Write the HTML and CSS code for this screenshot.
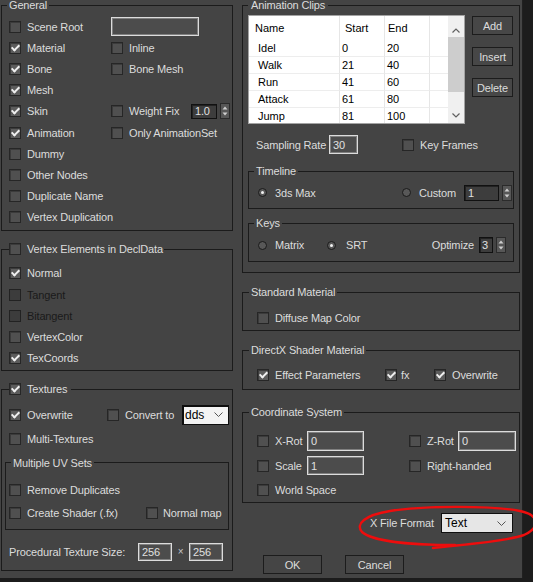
FILE: index.html
```html
<!DOCTYPE html>
<html>
<head>
<meta charset="utf-8">
<title>X File Export</title>
<link rel="stylesheet" href="styles.css">
</head>
<body>
<div class="window">
  <div class="col col-left">
    <fieldset class="group g-general">
      <legend>General</legend>
      <div class="grid2">
        <div class="chk"><span class="cb"></span>Scene Root</div>
        <div class="chk"><span class="tf tf-scene"></span></div>
        <div class="chk"><span class="cb on"></span>Material</div>
        <div class="chk"><span class="cb"></span>Inline</div>
        <div class="chk"><span class="cb on"></span>Bone</div>
        <div class="chk"><span class="cb"></span>Bone Mesh</div>
        <div class="chk"><span class="cb on"></span>Mesh</div>
        <div></div>
        <div class="chk"><span class="cb on"></span>Skin</div>
        <div class="chk"><span class="cb"></span>Weight Fix
          <span class="spin push"><span class="sf sf-wf">1.0</span><span class="arr"><svg width="8" height="14" viewBox="0 0 8 14"><polygon points="1.5,5.5 4,2.5 6.5,5.5" fill="#cfcfcf"/><polygon points="1.5,8.5 4,11.5 6.5,8.5" fill="#cfcfcf"/></svg></span></span>
        </div>
        <div class="chk"><span class="cb on"></span>Animation</div>
        <div class="chk"><span class="cb"></span>Only AnimationSet</div>
        <div class="chk span2"><span class="cb"></span>Dummy</div>
        <div class="chk span2"><span class="cb"></span>Other Nodes</div>
        <div class="chk span2"><span class="cb"></span>Duplicate Name</div>
        <div class="chk span2"><span class="cb"></span>Vertex Duplication</div>
      </div>
    </fieldset>

    <fieldset class="group g-vertex">
      <legend class="cbleg"><span class="cb"></span>Vertex Elements in DeclData</legend>
      <div class="rows1">
        <div class="chk"><span class="cb on"></span>Normal</div>
        <div class="chk dis"><span class="cb"></span>Tangent</div>
        <div class="chk dis"><span class="cb"></span>Bitangent</div>
        <div class="chk"><span class="cb"></span>VertexColor</div>
        <div class="chk"><span class="cb on"></span>TexCoords</div>
      </div>
    </fieldset>

    <fieldset class="group g-tex">
      <legend class="cbleg tex-leg"><span class="cb on"></span>Textures</legend>
      <div class="tex-row1">
        <div class="chk c1"><span class="cb on"></span>Overwrite</div>
        <div class="chk"><span class="cb"></span>Convert to</div>
        <div class="dd dd-dds"><span>dds</span><svg width="9" height="5" viewBox="0 0 9 5"><polyline points="0.5,0.5 4.5,4.5 8.5,0.5" fill="none" stroke="#555" stroke-width="1"/></svg></div>
      </div>
      <div class="tex-row2">
        <div class="chk"><span class="cb"></span>Multi-Textures</div>
      </div>
      <fieldset class="group g-uv">
        <legend>Multiple UV Sets</legend>
        <div class="grid-uv">
          <div class="chk span2"><span class="cb"></span>Remove Duplicates</div>
          <div class="chk"><span class="cb"></span>Create Shader (.fx)</div>
          <div class="chk gap5"><span class="cb"></span>Normal map</div>
        </div>
      </fieldset>
      <div class="proc">
        <span class="lbl">Procedural Texture Size:</span>
        <span class="tf tf-256">256</span>
        <span class="times">×</span>
        <span class="tf tf-256">256</span>
      </div>
    </fieldset>
  </div>

  <div class="col col-right">
    <fieldset class="group g-anim">
      <legend>Animation Clips</legend>
      <div class="clips">
        <div class="list">
          <div class="table">
            <div class="th c1">Name</div><div class="th c2">Start</div><div class="th c3">End</div><div class="th c4"></div>
            <div class="td c1">Idel</div><div class="td c2">0</div><div class="td c3">20</div><div class="td c4"></div>
            <div class="td c1">Walk</div><div class="td c2">21</div><div class="td c3">40</div><div class="td c4"></div>
            <div class="td c1">Run</div><div class="td c2">41</div><div class="td c3">60</div><div class="td c4"></div>
            <div class="td c1">Attack</div><div class="td c2">61</div><div class="td c3">80</div><div class="td c4"></div>
            <div class="td c1">Jump</div><div class="td c2">81</div><div class="td c3">100</div><div class="td c4"></div>
          </div>
          <div class="sb">
            <div class="sb-up"><svg width="8" height="5" viewBox="0 0 8 5"><polyline points="0.5,4.5 4,1 7.5,4.5" fill="none" stroke="#606060" stroke-width="1.2"/></svg></div>
            <div class="sb-thumb"></div>
            <div class="sb-track"></div>
            <div class="sb-down"><svg width="8" height="5" viewBox="0 0 8 5"><polyline points="0.5,0.5 4,4 7.5,0.5" fill="none" stroke="#606060" stroke-width="1.2"/></svg></div>
          </div>
        </div>
        <div class="btns">
          <div class="btn">Add</div>
          <div class="btn">Insert</div>
          <div class="btn">Delete</div>
        </div>
      </div>
      <div class="samp">
        <span class="lbl">Sampling Rate</span>
        <span class="tf tf-samp">30</span>
        <div class="chk kf"><span class="cb"></span>Key Frames</div>
      </div>
      <fieldset class="group g-sub g-timeline">
        <legend>Timeline</legend>
        <div class="tl-row">
          <div class="rad"><span class="rb on"></span>3ds Max</div>
          <div class="rad"><span class="rb"></span>Custom
            <span class="spin push"><span class="sf sf-custom">1</span><span class="arr"><svg width="8" height="14" viewBox="0 0 8 14"><polygon points="1.5,5.5 4,2.5 6.5,5.5" fill="#cfcfcf"/><polygon points="1.5,8.5 4,11.5 6.5,8.5" fill="#cfcfcf"/></svg></span></span>
          </div>
        </div>
      </fieldset>
      <fieldset class="group g-sub g-keys">
        <legend>Keys</legend>
        <div class="keys-row">
          <div class="rad"><span class="rb"></span>Matrix</div>
          <div class="rad rad-srt"><span class="rb on"></span>SRT
            <span class="opt push">Optimize</span>
            <span class="spin"><span class="sf sf-opt">3</span><span class="arr"><svg width="8" height="14" viewBox="0 0 8 14"><polygon points="1.5,5.5 4,2.5 6.5,5.5" fill="#cfcfcf"/><polygon points="1.5,8.5 4,11.5 6.5,8.5" fill="#cfcfcf"/></svg></span></span>
          </div>
        </div>
      </fieldset>
    </fieldset>

    <fieldset class="group g-r g-std">
      <legend>Standard Material</legend>
      <div class="row16">
        <div class="chk"><span class="cb"></span>Diffuse Map Color</div>
      </div>
    </fieldset>

    <fieldset class="group g-r g-dx">
      <legend>DirectX Shader Material</legend>
      <div class="dx-row">
        <div class="chk"><span class="cb on"></span>Effect Parameters</div>
        <div class="chk gap4"><span class="cb on"></span>fx</div>
        <div class="chk"><span class="cb on"></span>Overwrite</div>
      </div>
    </fieldset>

    <fieldset class="group g-r g-coord">
      <legend>Coordinate System</legend>
      <div class="coord-grid">
        <div class="chk"><span class="cb"></span><span class="cl w32">X-Rot</span><span class="tf tf-x">0</span></div>
        <div class="chk"><span class="cb"></span><span class="cl w31">Z-Rot</span><span class="tf tf-z">0</span></div>
        <div class="chk"><span class="cb"></span><span class="cl w32">Scale</span><span class="tf tf-s">1</span></div>
        <div class="chk"><span class="cb"></span>Right-handed</div>
        <div class="chk span2"><span class="cb"></span>World Space</div>
      </div>
    </fieldset>

    <div class="xfile">
      <span>X File Format</span>
      <div class="dd dd-text"><span>Text</span><svg width="9" height="5" viewBox="0 0 9 5"><polyline points="0.5,0.5 4.5,4.5 8.5,0.5" fill="none" stroke="#555" stroke-width="1"/></svg></div>
    </div>

    <div class="actions">
      <div class="btn btn-wide">OK</div>
      <div class="btn btn-wide">Cancel</div>
    </div>
  </div>
</div>

<svg class="annot" width="533" height="582" viewBox="0 0 533 582">
  <path d="M433 548 C455 545 500 543 524 535 C540 528 540 515 520 511 C490 505 420 506 390 511 C365 515 355 524 362 532 C372 541 410 545 455 545" fill="none" stroke="#ee0d0d" stroke-width="2.4" stroke-linecap="round"/>
</svg>
</body>
</html>
```

FILE: styles.css
```css
* { box-sizing: border-box; }

html, body { margin: 0; padding: 0; }

body {
  position: relative;
  width: 533px;
  height: 582px;
  overflow: hidden;
  background: #1c1c1c;
  font-family: "Liberation Sans", Arial, sans-serif;
  font-size: 11px;
  letter-spacing: -0.15px;
  color: #dcdcdc;
}

.window {
  width: 523px;
  height: 578px;
  background: #444444;
  border-right: 1px solid #202020;
  display: flex;
  align-items: flex-start;
}

.col { display: flex; flex-direction: column; }
.col-left { width: 232px; margin-left: 1px; }
.col-right { width: 278px; margin-left: 9px; }

/* group boxes */
.group {
  margin: 0;
  min-width: 0;
  border: 1px solid #1b1b1b;
  padding: 0 7px;
}
.group > legend {
  padding: 0 2px;
  margin-left: -2px;
  line-height: 10px;
  color: #dcdcdc;
  white-space: nowrap;
}
.group > legend.cbleg {
  display: flex;
  align-items: center;
  gap: 6px;
  margin-left: 0;
  padding: 0 1px 0 0;
  line-height: 13px;
  height: 13px;
}

/* checkboxes */
.chk {
  display: flex;
  align-items: center;
  gap: 6px;
  white-space: nowrap;
  min-width: 0;
}
.chk.gap5 { gap: 5px; }
.chk.gap4 { gap: 4px; }
.chk.dis { color: #1a1a1a; }
.chk.dis .cb { background: #3c3c3c; border-color: #222; }

.cb {
  flex: none;
  width: 12px;
  height: 12px;
  display: inline-flex;
  align-items: center;
  justify-content: center;
  background: #505050;
  border: 1px solid #262626;
  box-shadow: inset 1px 1px 0 #3b3b3b;
}
.cb.on { background: #5c5c5c; }
.cb.on::after {
  content: "";
  width: 3px;
  height: 6px;
  border: solid #f0f0f0;
  border-width: 0 2px 2px 0;
  transform: rotate(45deg);
  margin-top: -2px;
}

/* radios */
.rad { display: flex; align-items: center; gap: 8px; white-space: nowrap; }
.rb {
  flex: none;
  width: 9px;
  height: 9px;
  border-radius: 50%;
  border: 1px solid #1a1a1a;
  background: #585858;
  display: inline-flex;
  align-items: center;
  justify-content: center;
}
.rb.on::after {
  content: "";
  width: 3px;
  height: 3px;
  border-radius: 50%;
  background: #f2f2f2;
}

.push { margin-left: auto; }
.span2 { grid-column: 1 / -1; }

/* text fields */
.tf {
  display: flex;
  align-items: center;
  flex: none;
  background: #4c4c4c;
  border: 1px solid #dcdcdc;
  box-shadow: inset 0 0 0 1px #808080;
  color: #e0e0e0;
  padding-left: 3px;
}
.tf-scene { width: 88px; height: 19px; }
.tf-256 { width: 34px; height: 18px; }
.tf-samp { width: 29px; height: 19px; }
.tf-x, .tf-s { width: 57px; }
.tf-x { height: 20px; }
.tf-s { height: 19px; }
.tf-z { width: 58px; height: 20px; }

/* spinners */
.spin { display: flex; align-items: center; gap: 3px; flex: none; }
.sf {
  height: 16px;
  background: #3d3d3d;
  border: 1px solid #111;
  box-shadow: inset 1px 1px 0 #222;
  color: #e0e0e0;
  display: flex;
  align-items: center;
  padding-left: 3px;
}
.sf-wf { width: 26px; height: 15px; }
.sf-custom { width: 35px; }
.sf-opt { width: 14px; padding-left: 2px; }
.arr {
  width: 10px;
  height: 16px;
  background: #575757;
  border: 1px solid #2b2b2b;
  display: flex;
  align-items: center;
  justify-content: center;
}
.arr svg { display: block; }

/* dropdowns */
.dd {
  display: flex;
  align-items: center;
  justify-content: space-between;
  color: #000;
  font-size: 12px;
  letter-spacing: 0;
}
.dd-dds {
  margin-left: auto;
  width: 47px;
  height: 20px;
  background: #f3f3f3;
  border: 1px solid #0e0e0e;
  box-shadow: inset 1px 1px 0 #0e0e0e;
  padding: 0 5px 0 2px;
}
.dd-text {
  width: 72px;
  height: 20px;
  background: #e6e6e6;
  border: 1px solid #0f0f0f;
  padding: 0 6px 0 3px;
}

/* General */
.g-general { padding: 6px 2px 2px 7px; }
.grid2 {
  display: grid;
  grid-template-columns: 102px 1fr;
  grid-auto-rows: 21.2px;
  align-items: center;
}

/* Vertex elements */
.g-vertex { margin-top: 12px; padding: 7px 7px 1px 7px; }
.rows1 { display: grid; grid-auto-rows: 21.2px; align-items: center; }

/* Textures */
.g-tex { margin-top: 12px; padding: 7px 3px 9px 7px; }
.g-tex > legend.tex-leg { padding-right: 4px; }
.tex-row1 { display: flex; align-items: center; height: 24px; }
.tex-row1 .c1 { width: 98px; }
.tex-row2 { display: flex; align-items: center; height: 25px; }
.g-uv { margin: 6px 0 0 -4px; padding: 11px 0 4px 3px; }
.g-uv > legend { margin-left: 2px; }
.grid-uv {
  display: grid;
  grid-template-columns: 137px 1fr;
  grid-auto-rows: 23px;
  align-items: center;
}
.proc { margin-top: 13px; display: flex; align-items: center; height: 18px; }
.proc .lbl { width: 129px; white-space: nowrap; }
.times { width: 17px; text-align: center; color: #c8c8c8; font-size: 10px; }

/* Animation clips */
.g-anim { padding: 5px 5px 10px 5px; }
.g-anim > legend { padding: 0 3px; margin-left: 0; }
.clips { display: flex; align-items: flex-start; }
.list {
  width: 217px;
  height: 109px;
  background: #fff;
  border: 1px solid #a3a3a3;
  display: flex;
  overflow: hidden;
}
.table {
  width: 199px;
  flex: none;
  display: grid;
  grid-template-columns: 91px 45px 45px 18px;
  grid-template-rows: 24px repeat(5, 17px);
  color: #000;
  letter-spacing: 0;
}
.th, .td {
  display: flex;
  align-items: center;
  white-space: nowrap;
  border-right: 1px solid #e6e6e6;
}
.td { border-bottom: 1px solid #ededed; }
.th.c4, .td.c4 { border-right: none; }
.th.c1 { padding-left: 6px; }
.th.c2 { padding-left: 5px; }
.th.c3 { padding-left: 3px; }
.td.c1 { padding-left: 9px; }
.td.c2 { padding-left: 2px; }
.td.c3 { padding-left: 2px; }
.sb {
  width: 16px;
  flex: none;
  height: 107px;
  background: #f0f0f0;
  display: flex;
  flex-direction: column;
}
.sb svg { display: block; }
.sb-up { height: 21px; display: flex; justify-content: center; align-items: flex-end; padding-bottom: 4px; }
.sb-thumb { height: 55px; background: #cdcdcd; }
.sb-track { flex: 1; }
.sb-down { height: 16px; display: flex; justify-content: center; align-items: center; }

.btns { display: flex; flex-direction: column; gap: 12px; margin: 1px 0 0 7px; }
.btn {
  width: 41px;
  height: 19px;
  background: #474747;
  border: 1px solid #1c1c1c;
  color: #dcdcdc;
  display: flex;
  align-items: center;
  justify-content: center;
}
.btn-wide { width: 59px; height: 19px; background: #454545; }

.samp { display: flex; align-items: center; height: 19px; margin-top: 11px; padding-left: 8px; }
.samp .lbl { width: 73px; white-space: nowrap; }
.kf { margin-left: 44px; }

.g-sub { padding: 7px 7px 6px 9px; }
.g-sub > legend { margin-left: -4px; }
.g-timeline { margin-top: 12px; }
.tl-row { display: grid; grid-template-columns: 144px 1fr; height: 19px; align-items: center; }
.g-keys { margin-top: 9px; padding-top: 8px; padding-bottom: 7px; }
.keys-row { display: grid; grid-template-columns: 69px 1fr; height: 18px; align-items: center; }
.rad-srt { gap: 10px; }
.opt { margin-right: -5px; }

/* right lower groups */
.g-r { padding: 0 5px 0 14px; }
.g-r > legend { margin-left: -8px; }
.g-std { margin-top: 14px; padding-top: 13px; padding-bottom: 4px; }
.row16 { height: 16px; display: flex; align-items: center; }
.g-dx { margin-top: 14px; padding-top: 12px; padding-bottom: 6px; }
.dx-row { display: grid; grid-template-columns: 128px 49px 1fr; height: 16px; align-items: center; }
.g-coord { margin-top: 17px; padding: 11px 3px 0 14px; }
.coord-grid {
  display: grid;
  grid-template-columns: 152px 1fr;
  grid-template-rows: 25px 25px 24px;
  align-items: center;
}
.cl { flex: none; }
.w32 { width: 32px; margin-right: -6px; }
.w31 { width: 31px; margin-right: -6px; }

.xfile {
  margin-top: 10px;
  display: flex;
  justify-content: flex-end;
  align-items: center;
  gap: 7px;
  padding-right: 7px;
  height: 20px;
}

.actions { margin-top: 22px; display: flex; gap: 23px; padding-left: 21px; }

.annot { position: absolute; left: 0; top: 0; pointer-events: none; }
```
